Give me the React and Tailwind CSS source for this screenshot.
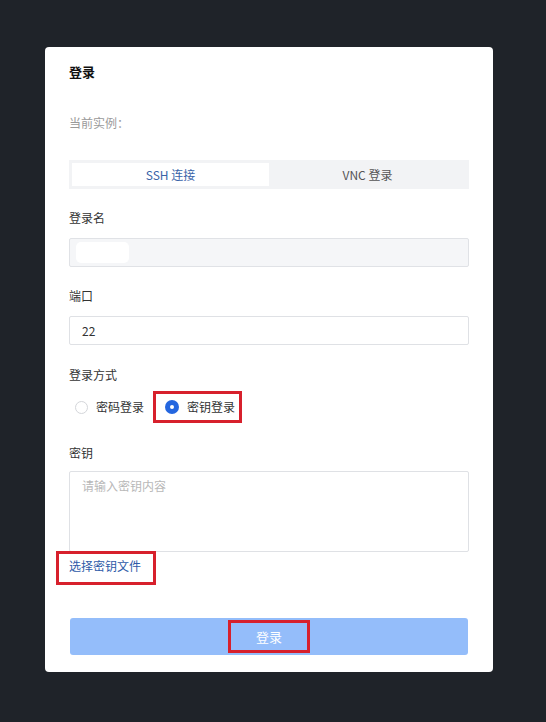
export default function App() {
  const font = { fontFamily: '"Noto Sans CJK SC", "Noto Sans", sans-serif' };
  return (
    <div className="min-h-[722px] w-full bg-[#1f2329] pt-[47px] pl-[45px]" style={font}>
      <div className="w-[448px] h-[625px] bg-white rounded-[4px] px-[24px] pt-[15px] flex flex-col text-[12px] leading-[20px] text-[#333]">
        <div className="font-bold text-[13px] text-[#111] h-[20px]">登录</div>
        <div className="mt-[31px] text-[#9a9a9a]">当前实例：</div>
        <div className="mt-[27px] w-[400px] h-[29px] bg-[#f2f3f5] p-[3px] flex">
          <div className="flex-1 bg-white flex items-center justify-center text-[#3a64a8]">SSH 连接</div>
          <div className="flex-1 flex items-center justify-center text-[#555]">VNC 登录</div>
        </div>
        <div className="mt-[19px]">登录名</div>
        <div className="mt-[10px] w-[400px] h-[29px] bg-[#f5f6f8] border border-[#e0e2e6] rounded-[2px] flex items-center px-[6px]">
          <div className="w-[53px] h-[21px] bg-white rounded-[5px]"></div>
        </div>
        <div className="mt-[19px]">端口</div>
        <div className="mt-[10px] w-[400px] h-[29px] bg-white border border-[#dfe1e5] rounded-[2px] flex items-center px-[12px] text-[#333]">22</div>
        <div className="mt-[20px]">登录方式</div>
        <div className="mt-[6px] h-[32px] flex items-center">
          <div className="flex items-center ml-[6px]">
            <div className="w-[13px] h-[13px] rounded-full border border-[#d4d6da] bg-white"></div>
            <span className="ml-[8px]">密码登录</span>
          </div>
          <div className="ml-[9px] h-[32px] border-[3px] border-[#d7202c] flex items-center pl-[9px] pr-[4px]">
            <div className="w-[14px] h-[14px] rounded-full bg-[#2466df] flex items-center justify-center">
              <div className="w-[4px] h-[4px] rounded-full bg-white"></div>
            </div>
            <span className="ml-[8px]">密钥登录</span>
          </div>
        </div>
        <div className="mt-[20px]">密钥</div>
        <div className="mt-[8px] w-[400px] h-[81px] bg-white border border-[#dfe1e5] rounded-[2px] px-[12px] pt-[4px] text-[#b8b8b8]">请输入密钥内容</div>
        <div className="mt-[4px] relative self-start">
          <span className="text-[#2e5aa8]">选择密钥文件</span>
          <div className="absolute left-[-13px] right-[-15px] top-[-5px] bottom-[-9px] border-[3px] border-[#d7202c]"></div>
        </div>
        <div className="mt-[42px] ml-[1px] w-[398px] h-[37px] bg-[#94bdfa] rounded-[3px] flex items-center justify-center">
          <div className="w-[82px] h-[33px] border-[3px] border-[#d7202c] flex items-center justify-center text-white text-[13px]">登录</div>
        </div>
      </div>
    </div>
  );
}
